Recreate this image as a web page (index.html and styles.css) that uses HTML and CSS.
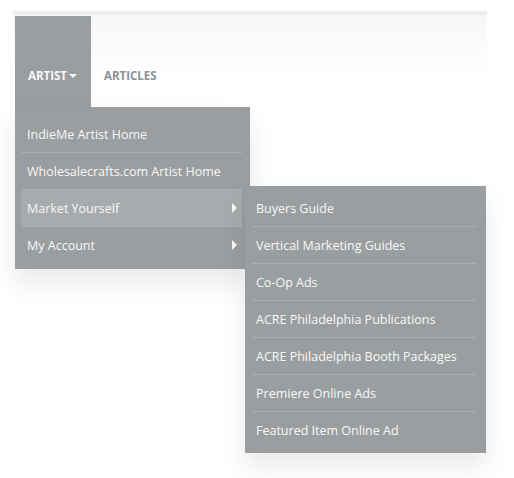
FILE: index.html
```html
<!DOCTYPE html>
<html lang="en">
<head>
    <meta charset="UTF-8">
    <title>Artist Menu</title>
    <link rel="stylesheet" href="styles.css">
</head>
<body>

    <div class="header">
        <ul class="nav">
            <li class="nav-item open">
                <a href="#" class="nav-link">Artist<span class="caret"></span></a>

                <!-- Artist dropdown -->
                <ul class="dropdown">
                    <li><a href="#">IndieMe Artist Home</a></li>
                    <li><a href="#">Wholesalecrafts.com Artist Home</a></li>
                    <li class="has-sub active">
                        <a href="#">Market Yourself<span class="arrow"></span></a>
                        <ul class="submenu">
                            <li><a href="#">Buyers Guide</a></li>
                            <li><a href="#">Vertical Marketing Guides</a></li>
                            <li><a href="#">Co-Op Ads</a></li>
                            <li><a href="#">ACRE Philadelphia Publications</a></li>
                            <li><a href="#">ACRE Philadelphia Booth Packages</a></li>
                            <li><a href="#">Premiere Online Ads</a></li>
                            <li><a href="#">Featured Item Online Ad</a></li>
                        </ul>
                    </li>
                    <li class="has-sub"><a href="#">My Account<span class="arrow"></span></a></li>
                </ul>
            </li>
            <li class="nav-item">
                <a href="#" class="nav-link">Articles</a>
            </li>
        </ul>
    </div>

</body>
</html>
```

FILE: styles.css
```css
body {
    font-family: 'Open Sans', 'Liberation Sans', sans-serif;
    margin: 0;
    padding: 0;
    min-height: 478px;
    background: #fff;
    color: #333;
}

ul {
    list-style: none;
    margin: 0;
    padding: 0;
}

a {
    text-decoration: none;
    color: inherit;
}

.header {
    position: relative;
    margin: 11px 27px 0 13px;
    border-top: 4px solid #ededed;
    padding: 1px 0 0 2px;
    background: linear-gradient(to bottom, #f6f7f8, #fff 70%);
}

.nav {
    display: flex;
    height: 91px;
}

.nav-item {
    position: relative;
    height: 91px;
}

.nav-link {
    display: flex;
    align-items: center;
    padding: 54px 13px 25px 13px;
    font-size: 11.5px;
    font-weight: 700;
    line-height: 12px;
    text-transform: uppercase;
    color: #8c9194;
}

.nav-item.open {
    background-color: #9a9ea1;
}

.nav-item.open .nav-link {
    color: #f8f8f4;
    padding-right: 14px;
}

.caret {
    width: 0;
    height: 0;
    margin-left: 2px;
    border-left: 4px solid transparent;
    border-right: 4px solid transparent;
    border-top: 4px solid #f8f8f4;
}

.dropdown,
.submenu {
    position: absolute;
    background-color: #9a9ea1;
    box-shadow: 0 14px 26px rgba(0, 0, 0, 0.09);
    color: #f8f8f4;
    font-size: 12.5px;
}

.dropdown {
    top: 91px;
    left: 0;
    width: 221px;
    padding: 9px 8px 6px 6px;
    z-index: 2;
}

.dropdown > li {
    position: relative;
    border-bottom: 1px solid #abafb2;
}

.dropdown > li:last-child {
    border-bottom: none;
}

.dropdown > li > a {
    display: flex;
    align-items: center;
    justify-content: space-between;
    height: 36px;
    padding: 0 5px 0 6px;
}

.dropdown > li.active > a {
    background-color: #a7abae;
}

.arrow {
    width: 0;
    height: 0;
    border-top: 5px solid transparent;
    border-bottom: 5px solid transparent;
    border-left: 5px solid #f8f8f4;
}

.submenu {
    top: -4px;
    left: 224px;
    width: 225px;
    padding: 4px 9px 5px 7px;
    z-index: 3;
}

.submenu li {
    border-bottom: 1px solid #abafb2;
}

.submenu li:last-child {
    border-bottom: none;
}

.submenu a {
    display: flex;
    align-items: center;
    height: 36px;
    padding: 0 4px;
}
```
